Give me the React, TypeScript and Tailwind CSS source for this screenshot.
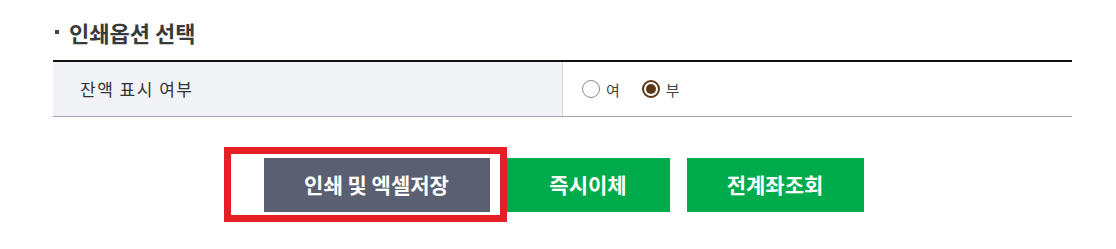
import React from "react";

const FONT = "font-['Noto_Sans_CJK_KR','Noto_Sans',sans-serif]";

function Radio({ label, checked }: { label: string; checked?: boolean }) {
  return (
    <label className="flex items-center gap-[6px] text-[15px] text-[#444]">
      <span
        className={
          checked
            ? "flex h-[18px] w-[18px] items-center justify-center rounded-full border-2 border-[#5b3617] bg-white"
            : "flex h-[18px] w-[18px] items-center justify-center rounded-full border-[1.5px] border-[#8a8a8a] bg-white"
        }
      >
        {checked && <span className="h-[10px] w-[10px] rounded-full bg-[#5b3617]" />}
      </span>
      <span className="leading-none">{label}</span>
    </label>
  );
}

export default function App() {
  return (
    <div className={`h-[249px] w-[1116px] overflow-hidden bg-white ${FONT}`}>
      <div className="pl-[53px] pr-[44px]">
        <h2 className="mt-[18px] flex h-[28px] items-center text-[22px] font-bold leading-[28px] text-[#3a3a3a]">
          <span className="ml-[2px] mr-[10px] h-[4px] w-[4px] bg-[#444]" />
          인쇄옵션 선택
        </h2>

        <div className="mt-[14px] flex border-t-2 border-b border-t-[#111] border-b-[#9ea3ad]">
          <div className="flex h-[54px] w-[510px] items-center border-r border-[#d6d9df] bg-[#f2f3f7] pl-[27px] text-[17px] tracking-[1.5px] text-[#333]">
            잔액 표시 여부
          </div>
          <div className="flex flex-1 items-center gap-[22px] pl-[19px]">
            <Radio label="여" />
            <Radio label="부" checked />
          </div>
        </div>

        <div className="mt-[41px] flex justify-center gap-[17px] pl-[2px]">
          <div className="relative">
            <button
              type="button"
              className="flex h-[54px] w-[226px] items-center justify-center bg-[#5a5f71] text-[21px] font-bold text-white"
            >
              인쇄 및 엑셀저장
            </button>
            <span className="pointer-events-none absolute -top-[11px] -bottom-[10px] -left-[40px] -right-[17px] border-[7px] border-[#e61e25]" />
          </div>
          <button
            type="button"
            className="flex h-[54px] w-[163px] items-center justify-center bg-[#00ab4b] text-[21px] font-bold text-white"
          >
            즉시이체
          </button>
          <button
            type="button"
            className="flex h-[54px] w-[177px] items-center justify-center bg-[#00ab4b] text-[21px] font-bold text-white"
          >
            전계좌조회
          </button>
        </div>
      </div>
    </div>
  );
}
